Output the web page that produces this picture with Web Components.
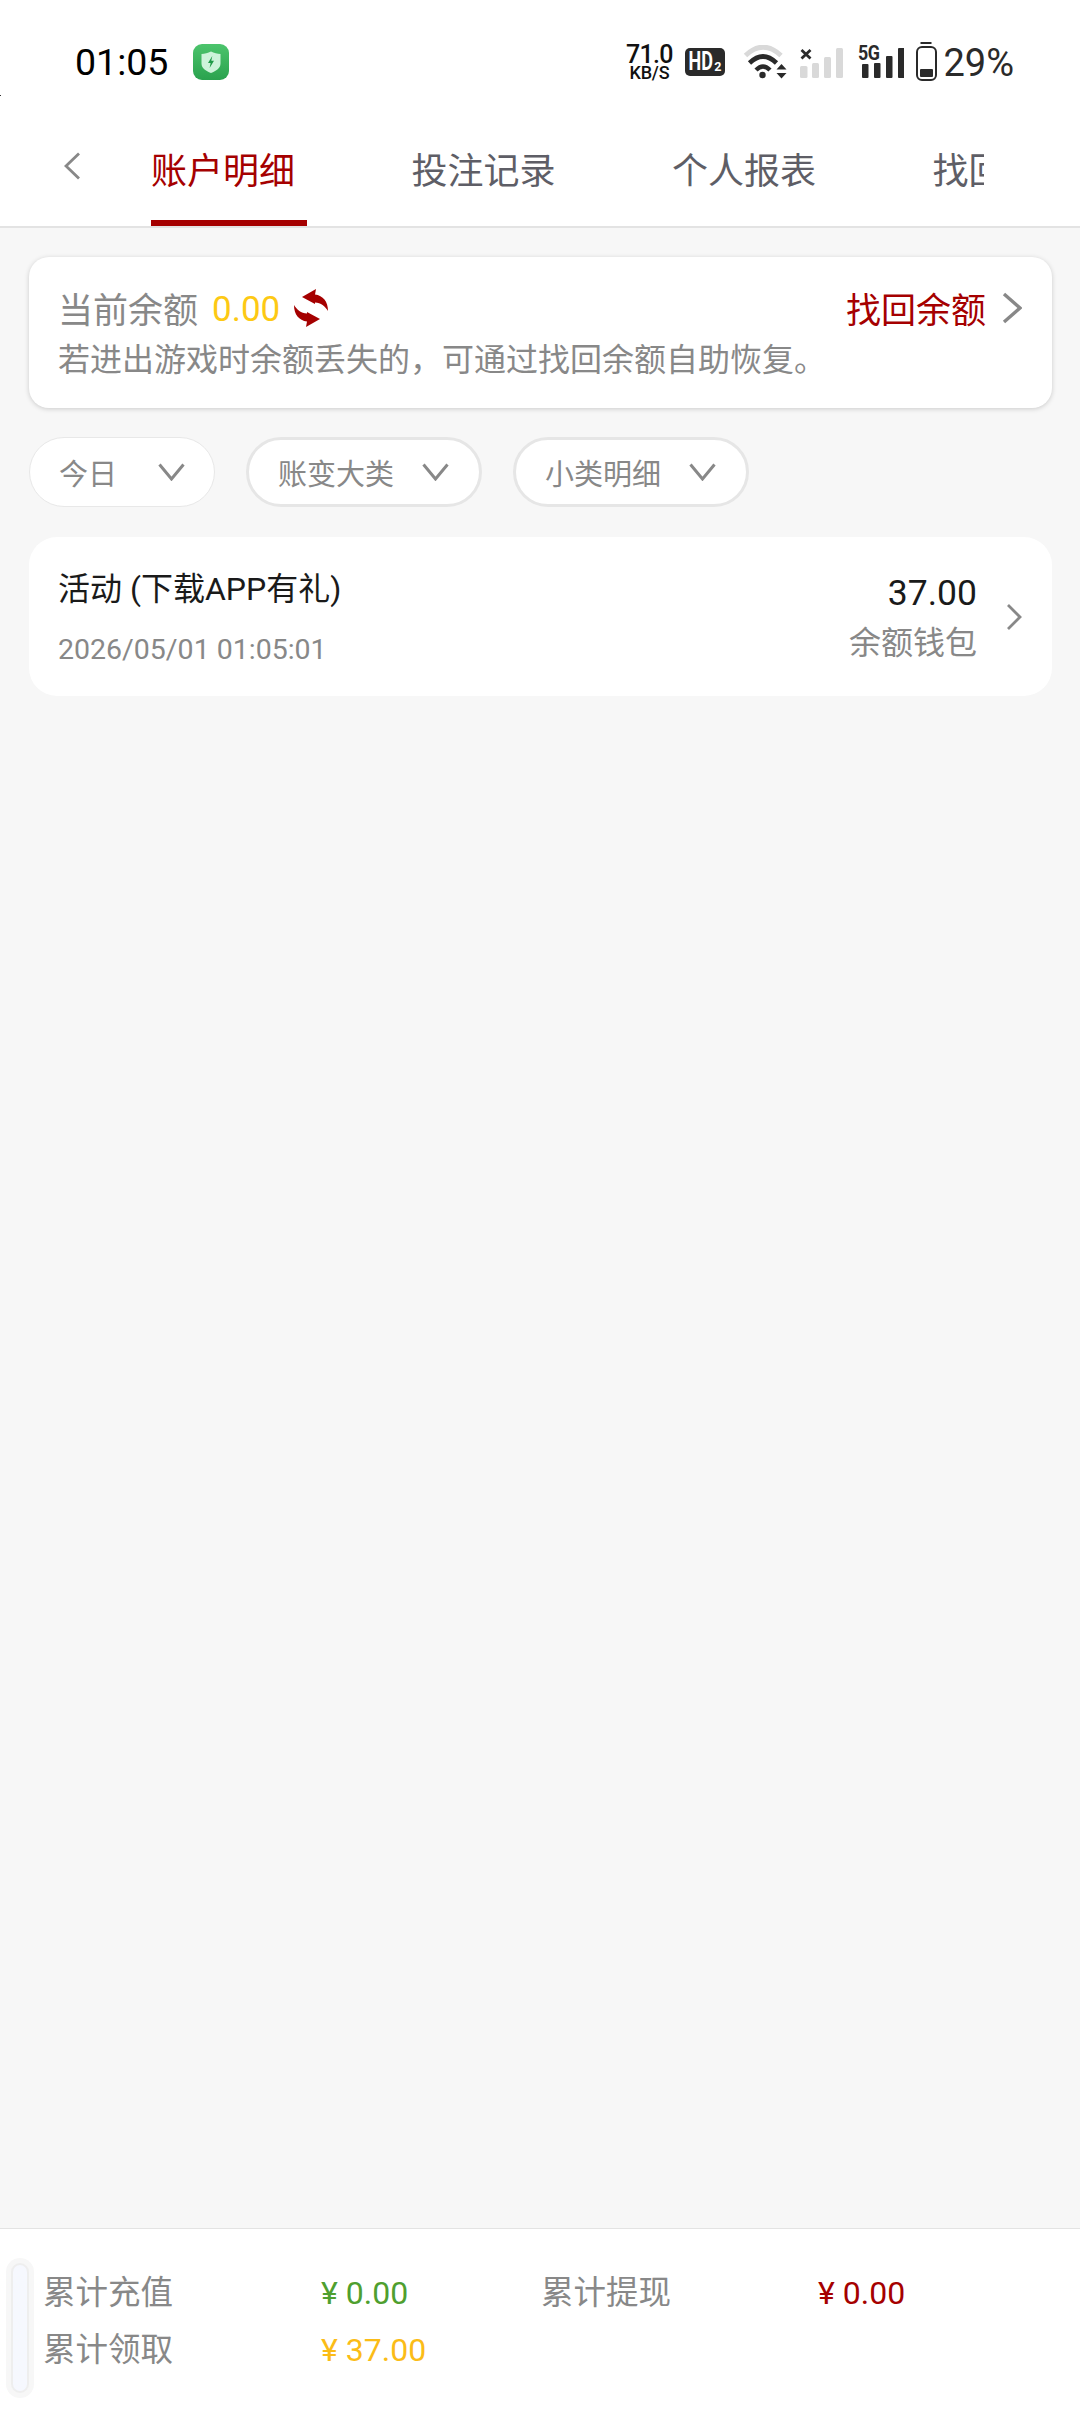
<!DOCTYPE html>
<html lang="zh-CN"><head><meta charset="utf-8"><title>账户明细</title>
<style>
html,body{margin:0;padding:0}
body{width:1080px;height:2412px;display:flex;flex-direction:column;background:#f7f7f7;font-family:Roboto,"Noto Sans CJK SC",sans-serif;overflow:hidden;position:relative}
main-area{flex:1}
</style></head><body>
<status-bar></status-bar>
<tab-nav></tab-nav>
<main-area>
  <balance-card></balance-card>
  <filter-row>
    <filter-pill thin>今日</filter-pill>
    <filter-pill>账变大类</filter-pill>
    <filter-pill>小类明细</filter-pill>
  </filter-row>
  <record-row title="活动 (下载APP有礼)" date="2026/05/01 01:05:01" amount="37.00" wallet="余额钱包"></record-row>
</main-area>
<summary-footer></summary-footer>
<script>
const F='font-family:Roboto,"Noto Sans CJK SC",sans-serif;';
function def(name,html){
  customElements.define(name,class extends HTMLElement{
    connectedCallback(){
      if(this.shadowRoot)return;
      const r=this.attachShadow({mode:'open'});
      r.innerHTML=typeof html==='function'?html(this):html;
    }
  });
}
def('status-bar',`<style>
:host{display:flex;height:124px;background:#fff;align-items:center;padding-left:75px;padding-right:66px;box-sizing:border-box;position:relative;${F}color:#000}
.time{font-size:37.500px;line-height:44px;width:118px}
.app{width:36px;height:36px;display:block}
.r{margin-left:auto;display:flex;align-items:center}
.speed{width:46px;display:flex;flex-direction:column;align-items:center;font-weight:500;color:#111}
.speed b{font-weight:500;font-size:25px;line-height:21px;letter-spacing:-.7px}
.speed i{font-style:normal;font-size:18px;line-height:16px;letter-spacing:-.2px}
.hd{width:40px;height:28px;background:#2a2a2a;border-radius:5px;color:#fff;margin-left:13px;font-weight:700;display:flex;align-items:center;justify-content:center;overflow:hidden}
.hd span{display:block;font-size:25px;line-height:28px;transform:scaleX(.72);transform-origin:100% 50%;margin-left:-10px}
.hd em{display:block;font-style:normal;font-size:12.500px;line-height:12px;margin:10px 0 0 1px}
svg{display:block}
.sig2{position:relative;width:46px;height:34px;margin-left:14.500px}
.sig2 span{position:absolute;left:0;top:-1px;font-size:21px;line-height:18px;font-weight:700;color:#2a2a2a;transform:scaleX(.85);transform-origin:0 50%;letter-spacing:-.6px}
.pct{font-size:38px;line-height:44px;color:#2a2a2a;margin-left:6px;margin-top:2px}
.dot{position:absolute;left:0;top:95px;width:1px;height:1px;background:#333}
</style>
<span class="time">01:05</span>
<svg class="app" viewBox="0 0 36 36"><defs><linearGradient id="g" x1="0" y1="0" x2="0" y2="1"><stop offset="0" stop-color="#4cc46c"/><stop offset="1" stop-color="#2aa24e"/></linearGradient></defs><rect width="36" height="36" rx="9" fill="url(#g)"/><path d="M18 7.500c3 1.600 6.400 2.400 9.500 2.600v9.400c0 4.600-4.200 7.600-9.500 9.500-5.300-1.900-9.500-4.900-9.500-9.500v-9.400C11.600 9.900 15 9.100 18 7.500z" fill="#cdf3da"/><path d="M19.300 12l-4.300 7h2.600l-1 5 4.400-7.200h-2.700z" fill="#1f9a47"/></svg>
<div class="r">
  <div class="speed"><b>71.0</b><i>KB/S</i></div>
  <div class="hd"><span>HD</span><em>2</em></div>
  <svg style="margin-left:17px" width="46" height="34" viewBox="744 44 46 34"><path d="M747.500 54.500Q765 38 783 54.500" fill="none" stroke="#d9d9d9" stroke-width="5"/><path d="M751.500 62Q765 49 778.500 62" fill="none" stroke="#2a2a2a" stroke-width="4.600"/><path d="M758 69Q765 62 772 69" fill="none" stroke="#2a2a2a" stroke-width="4.400"/><circle cx="764.500" cy="74" r="3.200" fill="#2a2a2a"/><path d="M783.500 63l5 5.500h-10zM783.500 77.500l5-5.500h-10z" fill="#2a2a2a"/></svg>
  <svg style="margin-left:11.500px" width="44" height="34" viewBox="800 44 44 34"><path d="M801.500 49l9 8.500M810.500 49l-9 8.500" stroke="#2a2a2a" stroke-width="2.800"/><g fill="#d9d9d9"><rect x="800" y="65" width="7.500" height="12" rx="1.500"/><rect x="812" y="62" width="7" height="15" rx="1.500"/><rect x="824" y="56" width="7" height="21" rx="1.500"/><rect x="836" y="47" width="7" height="30" rx="1.500"/></g></svg>
  <div class="sig2"><span>5G</span><svg width="46" height="34" viewBox="859 44 46 34"><g fill="#2a2a2a"><rect x="863" y="63" width="6.500" height="14" rx="1"/><rect x="875" y="62" width="6.500" height="15" rx="1"/><rect x="887" y="55" width="6.500" height="22" rx="1"/><rect x="899" y="47" width="6.500" height="30" rx="1"/></g></svg></div>
  <svg style="margin-left:12px" width="21" height="40" viewBox="917 42 21 40"><rect x="921.500" y="42" width="11" height="2" fill="#2a2a2a"/><rect x="918" y="47" width="19" height="33" rx="5" fill="none" stroke="#2a2a2a" stroke-width="2"/><rect x="921" y="69" width="13" height="8" rx="1" fill="#2a2a2a"/></svg>
  <span class="pct">29%</span>
</div>
<span class="dot"></span>`);
def('tab-nav',`<style>
:host{display:flex;height:104px;background:#fff;border-bottom:2px solid #e3e3e3;padding-left:64px;box-sizing:border-box;align-items:stretch;${F}}
.back{width:16px;margin:28px 71px 0 0;display:block;flex:none}
.tabs{width:833px;display:flex;gap:104.500px;overflow:hidden}
.tab{width:156px;flex:none;box-sizing:border-box;font-size:36px;line-height:48px;padding-top:24px;color:#5e5e66;white-space:nowrap;height:102px}
.on{color:#a50000;border-bottom:6px solid #a50000}
</style>
<svg class="back" width="16" height="28" viewBox="0 0 16 28"><path d="M15 1.500L2 14l13 12.500" fill="none" stroke="#888" stroke-width="2.800"/></svg>
<div class="tabs"><div class="tab on">账户明细</div><div class="tab">投注记录</div><div class="tab">个人报表</div><div class="tab">找回余额</div></div>`);
def('main-area',`<style>:host{display:block;padding:29px 28px 0 29px;box-sizing:border-box}</style><slot></slot>`);
def('balance-card',`<style>
:host{display:block;height:151px;box-sizing:border-box;padding:26px 30px 0 29px;background:#fff;border-radius:20px;box-shadow:0 1px 5px rgba(0,0,0,.18);${F}}
.row{display:flex;align-items:center;height:50px}
.l{font-size:35px;color:#888;margin-bottom:2px}
.v{font-size:35px;color:#fdc914;margin-left:14px;margin-top:2px}
.ref{margin-left:13px;display:block;margin-top:-1px}
.fb{margin-left:auto;font-size:35px;color:#a50000;margin-bottom:2px}
.ch{margin-left:16px;display:block}
.sub{font-size:32px;line-height:50px;color:#888;white-space:nowrap;margin-top:2px}
</style>
<div class="row"><span class="l">当前余额</span><span class="v">0.00</span>
<svg class="ref" width="36" height="38" viewBox="0 0 36 38"><g fill="#a50000"><path d="M9 8L23 0l-1 5.500C30 6.500 35 12.500 35 22c-3-5-7-8-13-8.500V15z"/><path d="M9 8L23 0l-1 5.500C30 6.500 35 12.500 35 22c-3-5-7-8-13-8.500V15z" transform="rotate(180 18 19)"/></g></svg>
<span class="fb">找回余额</span>
<svg class="ch" width="20" height="32" viewBox="0 0 20 32"><path d="M2 2l16 14L2 30" fill="none" stroke="#888" stroke-width="3.400"/></svg></div>
<div class="sub">若进出游戏时余额丢失的&#xFF0C;可通过找回余额自助恢复&#x3002;</div>`);
def('filter-row',`<style>:host{display:flex;gap:31px;margin-top:29px}</style><slot></slot>`);
def('filter-pill',`<style>
:host{display:flex;align-items:center;width:236px;height:70px;box-sizing:border-box;background:#fff;border-radius:35px;border:3px solid #e6e6e6;padding:0 30px 0 29px;font-size:29px;color:#888;${F}}
:host([thin]){border:1px solid #e8e8e8;width:186px;padding:0 29px}
svg{margin-left:auto;display:block}
</style><slot></slot><svg width="27" height="18" viewBox="0 0 27 18"><path d="M1.500 1.500L13.500 16 25.500 1.500" fill="none" stroke="#888" stroke-width="3"/></svg>`);
def('record-row',e=>`<style>
:host{display:flex;height:159px;margin-top:30px;box-sizing:border-box;background:#fff;border-radius:28px;padding:0 30px 0 29px;${F}align-items:flex-start}
.l{padding-top:27px}
.t{font-size:32px;line-height:50px;color:#1a1a1a;white-space:nowrap}
.d{font-size:28.500px;line-height:50px;color:#888;margin-top:11px;white-space:nowrap}
.r{margin-left:auto;padding-top:31px;text-align:right}
.a{font-size:35.500px;line-height:50px;color:#1a1a1a}
.w{font-size:32px;line-height:50px;color:#888}
svg{display:block;margin:67px 0 0 29px}
</style><div class="l"><div class="t">${e.getAttribute('title')}</div><div class="d">${e.getAttribute('date')}</div></div>
<div class="r"><div class="a">${e.getAttribute('amount')}</div><div class="w">${e.getAttribute('wallet')}</div></div>
<svg width="16" height="26" viewBox="0 0 16 26"><path d="M2 1l12 12L2 25" fill="none" stroke="#888" stroke-width="2.800"/></svg>`);
def('summary-footer',`<style>
:host{display:block;height:184px;box-sizing:border-box;background:#fff;border-top:1px solid #e3e3e3;padding:35px 0 0 43px;position:relative;${F}}
.g{display:grid;grid-template-columns:278px 220px 277px 1fr;grid-auto-rows:57px;align-items:center}
.k{font-size:32.500px;color:#888;margin-bottom:6px}
.v{font-size:32px}
.handle{position:absolute;left:11px;top:34px;width:18px;height:130px;box-sizing:border-box;border-radius:9px;background:#f6f8fe;border:2px solid #eeeeee;box-shadow:0 0 0 5px #f7f7f7}
</style><div class="handle"></div>
<div class="g"><span class="k">累计充值</span><span class="v" style="color:#4f9f2f">¥ 0.00</span><span class="k">累计提现</span><span class="v" style="color:#a50000">¥ 0.00</span>
<span class="k">累计领取</span><span class="v" style="color:#fbbc17">¥ 37.00</span></div>`);
</script>
</body></html>
